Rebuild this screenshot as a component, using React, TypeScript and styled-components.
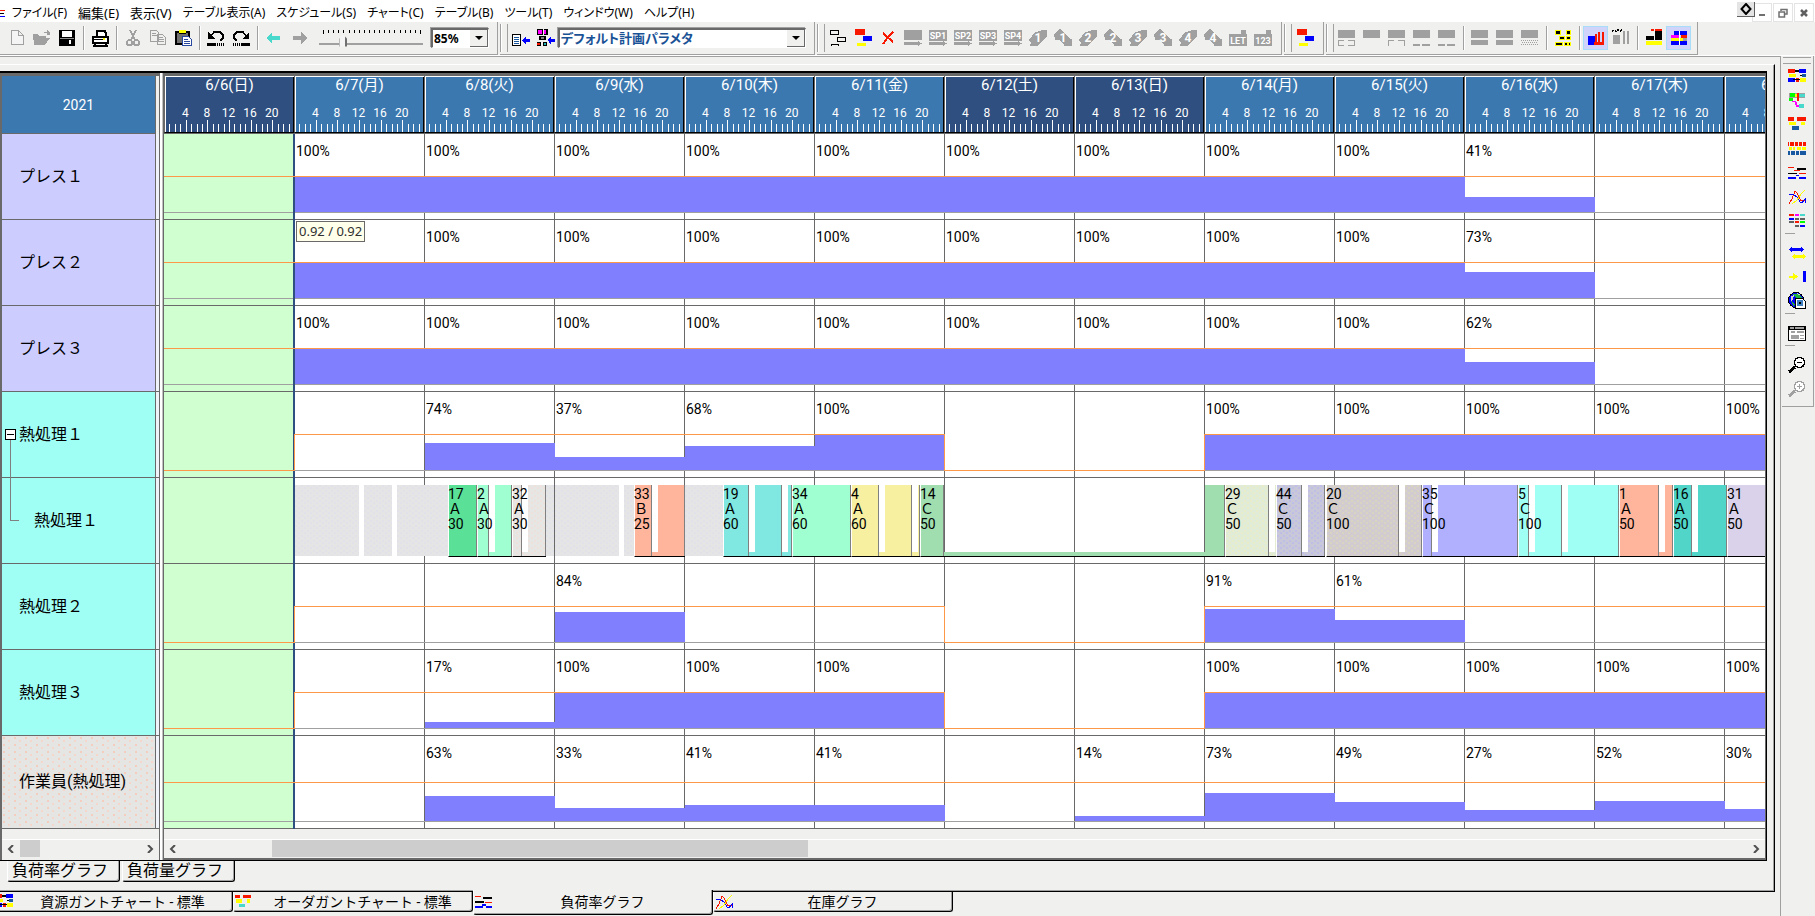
import React from "react";
import styled, { createGlobalStyle, css } from "styled-components";

const uiFont = `"Noto Sans", "Noto Sans CJK JP", sans-serif`;
const gridFont = `Roboto, "Noto Sans CJK JP", sans-serif`;

const color = {
  face: "#f0f0ef",
  shade: "#a0a0a0",
  dark: "#696969",
  week: "#3c78b0",
  weekend: "#2f4f80",
  load: "#8080ff",
  limit: "#fc9848",
  past: "#d0ffd0",
};

const GlobalStyle = createGlobalStyle`
  *, *::before, *::after { box-sizing: border-box; }
  body { margin: 0; background: ${color.face}; font-family: ${uiFont}; color: #000; }
  button, select, input { font: inherit; color: inherit; margin: 0; padding: 0; border: 0; background: none; border-radius: 0; }
`;

/* ---------- icons ---------- */

type Px = [string, number, number, number, number];

const Svg = styled.svg`
  display: block;
  flex: none;
`;

const Pix = ({ px, children }: { px?: Px[]; children?: React.ReactNode }) => (
  <Svg width="18" height="18" viewBox="0 0 18 18" shapeRendering="crispEdges" aria-hidden="true">
    {(px || []).map(([c, x, y, w, h], i) => (
      <rect key={i} fill={c} x={x} y={y} width={w} height={h} />
    ))}
    {children}
  </Svg>
);

const R = "#f81800";
const B = "#0000ff";
const Y = "#ffff00";
const K = "#000";
const G = "#a0a0a0";
const T = "#48d8cc";
const N = "#1858a0";
const M = "#ff00ff";
const L = "#00ff00";

const steps: Px[] = [[R, 1, 0, 10, 6], [B, 9, 7, 9, 5], [Y, 3, 14, 9, 3]];
const resourceGantt: Px[] = [[R, 0, 1, 7, 4], [K, 7, 2, 4, 2], [B, 11, 1, 7, 4], [Y, 1, 6, 7, 3], [K, 12, 7, 2, 1], [N, 14, 6, 4, 3], [B, 0, 10, 7, 4], [R, 8, 10, 3, 4], [K, 5, 11, 7, 1], [Y, 12, 10, 6, 4]];
const orderGantt: Px[] = [[R, 0, 1, 6, 4], [R, 9, 1, 9, 4], [Y, 1, 6, 7, 3], [Y, 13, 6, 4, 3], [N, 4, 10, 7, 4]];
const orderGanttTab: Px[] = [[R, 0, 2, 5, 3], [R, 8, 2, 8, 3], [Y, 1, 6, 6, 4], [Y, 12, 6, 3, 4], [T, 4, 11, 6, 3]];
const loadGraph: Px[] = [[R, 0, 3, 6, 1], [K, 8, 4, 9, 2], [K, 0, 8, 9, 2], [R, 10, 9, 7, 1], [B, 0, 13, 8, 2], [B, 7, 11, 4, 2], [B, 11, 13, 6, 2]];

const icons: Record<string, React.ReactNode> = {
  new: <Pix><path d="M3.5 1.5H10.500L15.500 6.500V15.500H3.500ZM10.500 1.500V6.500H15.500" fill="#f4f4f4" stroke={G} /></Pix>,
  open: <Pix><path d="M0 5H5L6 7H13V9H17L12 16H1ZM11 3H14V1L17 4V6H14V4H11Z" fill={G} /></Pix>,
  save: <Pix px={[[K, 1, 1, 16, 16], ["#fff", 4, 2, 10, 6], ["#909090", 2, 9, 14, 1], ["#fff", 11, 11, 2, 4]]} />,
  print: <Pix><path d="M5.500 7V1.500H13.500L14.500 3.500V7M1.500 7.500H16.500V13.500H1.500ZM4.500 13.500H13.500L15.500 16.500H3.500Z" fill="#fff" stroke={K} strokeWidth="2" /><rect x="3" y="10" width="11" height="1" fill={K} /><rect x="12" y="9" width="2" height="2" fill={Y} /></Pix>,
  cut: <Pix><path d="M6 1L11 11M12 1L7 11" stroke={G} strokeWidth="2" fill="none" /><circle cx="5.500" cy="13.500" r="2.500" fill="none" stroke={G} strokeWidth="2" /><circle cx="12.500" cy="13.500" r="2.500" fill="none" stroke={G} strokeWidth="2" /></Pix>,
  copy: <Pix px={[[G, 3, 4, 4, 1], [G, 3, 6, 5, 1], [G, 10, 8, 4, 1], [G, 10, 10, 5, 1], [G, 10, 12, 5, 1]]}><path d="M1.500 1.500H7.500L9.500 3.500V12.500H1.500ZM8.500 5.500H13.500L16.500 8.500V15.500H8.500Z" fill="none" stroke={G} /></Pix>,
  paste: <Pix px={[[K, 1, 2, 15, 14], ["#707070", 3, 4, 11, 10], [Y, 5, 1, 7, 3], [K, 5, 4, 7, 1]]}><path d="M8.500 7.500H14.500L17.500 10.500V16.500H8.500Z" fill="#fff" stroke="#2848a0" /><path d="M10 10.500H14M10 12.500H16M10 14.500H16" stroke="#2848a0" /></Pix>,
  undo: <Pix px={[[K, 0, 14, 9, 3], [K, 10, 14, 1, 3], [K, 12, 14, 1, 3], [K, 14, 14, 1, 3], [K, 16, 14, 1, 3]]}><path d="M4 7L7 3H13L16 6V9L13 12" fill="none" stroke={K} strokeWidth="1.500" /><path d="M1 3V10H8Z" fill={K} /></Pix>,
  redo: <Pix px={[[K, 9, 14, 9, 3], [K, 1, 14, 1, 3], [K, 3, 14, 1, 3], [K, 5, 14, 1, 3], [K, 7, 14, 1, 3]]}><path d="M14 7L11 3H5L2 6V9L5 12" fill="none" stroke={K} strokeWidth="1.500" /><path d="M17 3V10H10Z" fill={K} /></Pix>,
  back: <Pix><path d="M1 9L7 4V7H15V11H7V14Z" fill={T} /></Pix>,
  forward: <Pix><path d="M17 9L11 3V7H3V11H11V15Z" fill={G} /></Pix>,
  listIn: <Pix><path d="M.500 5.500H8.500V16.500H.500Z" fill="#fff" stroke={K} /><path d="M2 8.500H7M2 10.500H7M2 12.500H7M2 14.500H7" stroke={N} /><path d="M10 11L14 7V10H18V13H14V16Z" fill={B} /></Pix>,
  chainIn: <Pix px={[[K, 0, 0, 6, 6], [M, 1, 1, 4, 4], [K, 7, 0, 4, 6], [M, 7, 1, 2, 4], [K, 2, 7, 7, 4], ["#808080", 4, 8, 3, 2], [K, 0, 13, 4, 4], [R, 0, 14, 3, 2], [K, 6, 13, 4, 4], ["#20b0b0", 7, 14, 2, 2]]}><path d="M11 11L14 7V10H18V13H14V16Z" fill={B} /></Pix>,
  flow: <Pix><path d="M1.500 1.500H9.500V5.500H1.500ZM8.500 8.500H16.500V12.500H8.500ZM2.500 17V15.500H9.500V17" fill="none" stroke={K} strokeWidth="1.500" /></Pix>,
  steps: <Pix px={steps} />,
  remove: <Pix><path d="M4 4L14 13M14 3L9 8L4 15" fill="none" stroke={R} strokeWidth="2" /></Pix>,
  block: <Pix px={[[G, 0, 1, 18, 10], [G, 0, 13, 15, 3]]}><path d="M14 12L18 14.500L14 17Z" fill={G} /></Pix>,
  g1: <Pix px={[[G, 0, 1, 17, 8], [G, 0, 11, 6, 1], [G, 0, 11, 1, 6], [G, 0, 16, 6, 1], [G, 10, 11, 7, 1], [G, 16, 11, 1, 6], [G, 10, 16, 7, 1]]} />,
  g2: <Pix px={[[G, 0, 1, 17, 8]]} />,
  g3: <Pix px={[[G, 0, 1, 17, 8], [G, 0, 11, 6, 1], [G, 0, 11, 1, 6], [G, 10, 11, 7, 1], [G, 16, 11, 1, 6]]} />,
  g4: <Pix px={[[G, 0, 1, 17, 8], [G, 0, 15, 7, 2], [G, 9, 15, 8, 2]]} />,
  g5: <Pix px={[[G, 0, 1, 17, 8], [G, 0, 11, 17, 5]]} />,
  g6: <Pix px={[[G, 0, 1, 17, 8]]}><path d="M0 11.500H17M1 13.500H17M0 15.500H17" stroke={G} strokeDasharray="1 1" /></Pix>,
  yellow: <Pix px={[[Y, 1, 1, 6, 5], [Y, 12, 1, 5, 5], [Y, 5, 7, 6, 4], [Y, 12, 7, 5, 4], [Y, 1, 13, 8, 4], [Y, 10, 13, 7, 4], [K, 2, 2, 4, 3], [K, 13, 2, 3, 3], [K, 6, 8, 4, 2], [K, 13, 8, 3, 2], [K, 2, 14, 6, 2], [K, 11, 14, 2, 2], [K, 15, 14, 1, 2]]} />,
  stackA: <Pix px={[[B, 1, 7, 7, 9], [R, 7, 13, 10, 3], [R, 8, 5, 2, 11], [R, 11, 3, 2, 11], [R, 15, 3, 2, 13]]} />,
  stackB: <Pix px={[[G, 1, 6, 7, 9], [G, 11, 2, 2, 13], [G, 15, 2, 2, 13]]}><path d="M0 2L2 1L4 2L6 1L8 2L10 1" stroke={K} strokeWidth="2" fill="none" strokeDasharray="2 1" /></Pix>,
  blockK: <Pix px={[[R, 6, 0, 3, 2], [R, 10, 0, 7, 2], [K, 10, 2, 7, 9], [K, 1, 7, 8, 4], [Y, 1, 12, 16, 4]]} />,
  layers: <Pix px={[[B, 4, 2, 13, 4], [M, 1, 6, 9, 3], [R, 11, 6, 6, 3], [Y, 1, 9, 12, 3], [G, 13, 9, 4, 3], [B, 1, 12, 16, 4], ["#fff", 9, 2, 1, 14]]} />,
  resourceGantt: <Pix px={resourceGantt} />,
  tree: <Pix px={[[G, 1, 1, 16, 5], [L, 2, 1, 5, 4], [Y, 7, 2, 3, 3], [R, 9, 1, 2, 8], [T, 11, 2, 6, 3], [L, 1, 6, 4, 3], [M, 4, 9, 4, 1], [M, 7, 10, 2, 3], [M, 8, 13, 3, 2], [T, 11, 12, 5, 4]]} />,
  orderGantt: <Pix px={orderGantt} />,
  threeRows: <Pix px={[[R, 0, 2, 1, 4], [R, 2, 2, 4, 4], [R, 7, 2, 3, 4], [R, 11, 2, 3, 4], [R, 15, 2, 3, 4], [Y, 1, 7, 3, 3], [Y, 5, 7, 2, 3], [Y, 9, 7, 4, 3], [Y, 14, 7, 4, 3], [N, 0, 11, 2, 4], [N, 3, 11, 4, 4], [N, 8, 11, 3, 4], [N, 12, 11, 6, 4]]} />,
  loadGraph: <Pix px={[[R, 0, 3, 6, 1], [R, 6, 6, 6, 1], [K, 9, 4, 9, 2], [K, 0, 9, 9, 1], [R, 11, 9, 7, 1], [B, 0, 13, 8, 2], [B, 8, 11, 3, 1], [B, 11, 13, 7, 2]]} />,
  stock: <Pix><path d="M1 16L4 11L7 3L9 5L13 13L17 12" stroke={R} fill="none" /><path d="M1 6L5 6L9 9L12 14L14 15L17 11L17 15" stroke={B} fill="none" /><path d="M17 2L13 6L9 12L4 16" stroke={Y} fill="none" /></Pix>,
  table: <Pix px={[[R, 1, 2, 5, 2], [M, 7, 2, 4, 2], [T, 12, 2, 5, 2], [B, 1, 6, 5, 2], ["#606060", 7, 6, 4, 2], ["#606060", 12, 6, 5, 2], ["#606060", 1, 9, 5, 2], [R, 7, 9, 4, 2], [L, 12, 9, 5, 2], ["#606060", 7, 13, 4, 2], [B, 12, 13, 5, 2]]} />,
  swap: <Pix><path d="M1 5.500L4 2V4H13V2L16 5.500L13 9V7H4V9Z" fill={B} /><path d="M4 12.500L7 10V11H15V10L18 12.500L15 15V14H7V15Z" fill={Y} /></Pix>,
  arrowIn: <Pix px={[[B, 15, 3, 3, 11]]}><path d="M1 8H5V5L10 8.500L5 12V10H1Z" fill={Y} /></Pix>,
  globe: <Pix><circle cx="8" cy="8" r="7.500" fill={B} stroke={K} /><path d="M5 2L11 2L14 6L10 8L7 5ZM3 9L7 12L6 15Z" fill="#20b040" /><path d="M3 4L6 3L5 8L3 9ZM8 1L12 2L11 3Z" fill="#d0d0d0" /><path d="M7.500 6.500H14.500L17.500 9.500V16.500H7.500Z" fill="#fff" stroke={K} /><rect x="9" y="8" width="6" height="6" fill="#4080c0" /><rect x="11" y="10" width="2" height="2" fill={K} /></Pix>,
  dialog: <Pix px={[[K, 0, 2, 18, 15], [G, 2, 3, 4, 2], [G, 7, 3, 9, 2], ["#fff", 1, 6, 16, 10], [G, 3, 7, 4, 2], [G, 9, 7, 7, 2], [G, 3, 11, 8, 4], [G, 12, 11, 4, 1], [G, 12, 14, 4, 1]]} />,
  zoomOut: <Pix><path d="M1 16L7 11" stroke={K} strokeWidth="3" /><circle cx="11.500" cy="6.500" r="5" fill="#fff" stroke={K} strokeWidth="1.500" /><path d="M9 6.500H14" stroke={K} /></Pix>,
  zoomIn: <Pix><path d="M1 16L7 11" stroke={G} strokeWidth="3" /><circle cx="11.500" cy="6.500" r="5" fill="#fff" stroke={G} strokeWidth="1.500" /><path d="M9 6.500H14M11.500 4V9" stroke={G} /></Pix>,
};

const TagText = styled.text<{ $big?: boolean }>`
  font: 700 ${(p) => (p.$big ? "12px" : "9px")} ${gridFont};
  fill: #fff;
  text-anchor: middle;
`;

const TagIcon = ({ tag }: { tag: string }) => (
  <Pix px={[[G, 0, 1, 18, 11], [G, 0, 13, 15, 3]]}>
    <path d="M14 12L18 14.500L14 17Z" fill={G} />
    <TagText x="9" y="10">{tag}</TagText>
  </Pix>
);
const BoxIcon = ({ tag }: { tag: string }) => (
  <Pix px={[[G, 0, 5, 18, 12], [G, 12, 1, 5, 4]]}>
    <TagText x="9" y="15">{tag}</TagText>
  </Pix>
);
const ArrowIcon = ({ tag, down }: { tag: string; down?: boolean }) => (
  <Pix>
    <path d={down ? "M0 5L6 0L17 10L18 9V17H9L10 16L5 11H1Z" : "M0 11L6 3L11 2L12 1H18V7L17 8L11 15L8 17H1L2 14Z"} fill={G} />
    <TagText x="9" y="13" $big>{tag}</TagText>
  </Pix>
);

/* ---------- menu bar ---------- */

const Page = styled.div`
  display: flex;
  flex-direction: column;
  min-height: 100vh;
  background: ${color.face};
`;

const MenuBar = styled.nav`
  display: flex;
  align-items: flex-end;
  height: 22px;
  background: #fff;
`;

const MenuList = styled.div`
  display: flex;
  gap: 11px;
  padding-left: 7px;
  flex: 1;
`;

const MenuItem = styled.button<{ $short?: boolean }>`
  font-size: ${(p) => (p.$short ? "13px" : "12px")};
  line-height: 18px;
  font-feature-settings: "palt";
  white-space: nowrap;
`;

const MenuMark = styled(Svg)`
  margin-bottom: 4px;
`;

const WindowButtons = styled.div`
  display: flex;
  align-items: flex-start;
  height: 22px;
`;

const WindowButton = styled.button<{ $raised?: boolean }>`
  display: grid;
  place-items: center;
  width: 20px;
  height: 19px;
  margin: 3px 1px 0 0;
  border: 1px solid #e4e4e4;
  ${(p) =>
    p.$raised &&
    css`
      width: 18px;
      height: 15px;
      margin: 2px -3px 0 0;
      background: #e4e4e4;
      border: 0;
      border-right: 1px solid #606060;
      border-bottom: 1px solid #606060;
      z-index: 1;
    `}
`;

/* ---------- tool bars ---------- */

const ToolBars = styled.div`
  display: flex;
  height: 34px;
  border-bottom: 1px solid #fff;
`;

const ToolGroup = styled.div<{ $first?: boolean }>`
  display: flex;
  align-items: center;
  height: 33px;
  padding: 0 6px 0 ${(p) => (p.$first ? "4px" : "0")};
  margin-right: 2px;
  border-right: 1px solid ${color.shade};
  border-bottom: 1px solid ${color.shade};
`;

const Grip = styled.div`
  width: 8px;
  height: 28px;
  border: solid ${color.shade};
  border-width: 0 1px;
  background: linear-gradient(90deg, #fff 1px, transparent 1px);
  flex: none;
`;

const ToolButton = styled.button<{ $on?: boolean }>`
  display: grid;
  place-items: center;
  width: 25px;
  height: 24px;
  flex: none;
  ${(p) =>
    p.$on &&
    css`
      background: #d0d4fa;
      border: 1px solid #a8dcf8;
    `}
`;

const Separator = styled.div`
  width: 8px;
  height: 24px;
  flex: none;
  background: linear-gradient(90deg, transparent 4px, ${color.shade} 4px, ${color.shade} 5px, #fff 5px, #fff 6px, transparent 6px);
`;

const SliderBox = styled.div`
  width: 104px;
  margin: 0 8px;
`;

const Slider = styled.input`
  display: block;
  width: 100%;
  height: 12px;
  appearance: none;
  background: linear-gradient(${color.shade}, ${color.shade}) 0 8px / 100% 2px no-repeat;
  &::-webkit-slider-thumb {
    appearance: none;
    width: 8px;
    height: 12px;
    background: #f4f4f4;
    border-right: 2px solid #707070;
    border-left: 1px solid #b0b0b0;
    clip-path: polygon(50% 0, 100% 35%, 100% 100%, 0 100%, 0 35%);
  }
`;

const Combo = styled.label<{ $wide?: boolean }>`
  display: flex;
  align-items: center;
  width: ${(p) => (p.$wide ? "248px" : "58px")};
  height: 20px;
  margin-right: 2px;
  background: #fff;
  border: 1px solid #fff;
  border-top: 2px solid ${color.dark};
  border-left: 2px solid ${color.dark};
  box-shadow: -1px -1px 0 ${color.shade};
`;

const ComboSelect = styled.select<{ $navy?: boolean }>`
  appearance: none;
  flex: 1;
  min-width: 0;
  height: 17px;
  padding-left: 1px;
  font-size: ${(p) => (p.$navy ? "13px" : "12px")};
  line-height: 17px;
  font-weight: 700;
  font-feature-settings: "palt";
  color: ${(p) => (p.$navy ? "#1a5296" : "#000")};
`;

const ComboArrow = styled.span`
  display: grid;
  place-items: center;
  width: 18px;
  height: 17px;
  background: ${color.face};
  border-right: 1px solid ${color.dark};
  border-bottom: 1px solid ${color.dark};
`;

/* ---------- work area ---------- */

const Body = styled.div`
  display: flex;
  flex: 1;
`;

const WorkArea = styled.main`
  flex: 1;
  min-width: 0;
  padding-top: 7px;
  border-top: 1px solid ${color.shade};
  border-right: 1px solid ${color.shade};
`;

const Frame = styled.section`
  margin-right: 5px;
  padding: 6px 7px 0 0;
  border-top: 1px solid #fff;
  border-right: 1px solid #000;
  border-bottom: 1px solid #000;
  box-shadow: inset -1px -1px 0 ${color.shade};
`;

const ChartBox = styled.div`
  display: flex;
  border: solid #000;
  border-width: 2px 1px 1px 0;
`;

const NamePane = styled.div`
  width: 160px;
  flex: none;
  border-top: 3px solid ${color.dark};
  border-left: 2px solid ${color.dark};
  border-right: 1px solid ${color.dark};
`;

const Splitter = styled.div`
  width: 4px;
  flex: none;
  background: linear-gradient(90deg, #fff 2px, #c0c0c0 2px, #c0c0c0 3px, ${color.dark} 3px);
`;

const ChartPane = styled.div`
  flex: 1;
  min-width: 0;
  border-top: 3px solid ${color.dark};
  border-right: 1px solid ${color.dark};
  border-bottom: 2px solid ${color.dark};
`;

const YearCell = styled.div`
  display: grid;
  place-items: center;
  height: 58px;
  margin-right: 3px;
  background: ${color.week};
  color: #fff;
  font: 14px/20px ${gridFont};
  border-right: 1px solid ${color.dark};
  border-bottom: 1px solid ${color.dark};
`;

type Tone = "lilac" | "cyan" | "grey";
const toneBackground = {
  lilac: "#ccccff",
  cyan: "#a0fff5",
  grey: "radial-gradient(circle at 2px 2px, #f4cdbf 0 1px, transparent 1px) 0 0 / 11px 7px, radial-gradient(circle at 7px 5px, #f4d6cb 0 1px, transparent 1px) 0 0 / 11px 7px, #e5e5e4",
};

const NameRow = styled.div<{ $tall?: boolean }>`
  display: flex;
  height: ${(p) => (p.$tall ? "93px" : "86px")};
  padding-right: 3px;
  background: #f0f4fa;
  border-bottom: 1px solid ${color.dark};
`;

const NameCell = styled.div<{ $tone: Tone; $indent?: boolean }>`
  position: relative;
  display: flex;
  align-items: center;
  flex: 1;
  padding-left: ${(p) => (p.$indent ? "32px" : "17px")};
  background: ${(p) => toneBackground[p.$tone]};
  border-right: 1px solid ${color.dark};
  font: 16px/20px ${gridFont};
  white-space: nowrap;
`;

const TreeToggle = styled.button`
  position: absolute;
  left: 3px;
  top: 37px;
  display: grid;
  place-items: center;
  width: 11px;
  height: 11px;
  background: #fff;
  border: 1px solid #000;
`;

const TreeLine = styled.span<{ $end?: boolean }>`
  position: absolute;
  left: 8px;
  top: ${(p) => (p.$end ? "0" : "48px")};
  width: ${(p) => (p.$end ? "9px" : "1px")};
  height: ${(p) => (p.$end ? "43px" : "38px")};
  border-left: 1px solid #808080;
  border-bottom: ${(p) => (p.$end ? "1px solid #808080" : "0")};
`;

const Timeline = styled.div`
  position: relative;
  overflow: hidden;
`;

const DayRow = styled.div`
  display: flex;
  height: 58px;
  background: ${color.week};
  border-bottom: 1px solid ${color.dark};
`;

const DayHead = styled.div<{ $off?: boolean }>`
  display: flex;
  flex-direction: column;
  align-items: center;
  width: 130px;
  flex: none;
  color: #fff;
  background: ${(p) => (p.$off ? color.weekend : color.week)};
  border-left: 1px solid ${color.dark};
  border-bottom: 1px solid #000;
  box-shadow: inset 1px 1px 0 #fff, inset -1px 0 0 #000;
  font-family: ${gridFont};
`;

const DayName = styled.div`
  height: 30px;
  font-size: 15px;
  line-height: 18px;
`;

const Hours = styled.div`
  display: grid;
  grid-template-columns: repeat(5, 1fr);
  width: 108px;
  height: 14px;
  margin-right: 2px;
  font-size: 12px;
  line-height: 15px;
  text-align: center;
`;

const LoadRow = styled.div<{ $tall?: boolean }>`
  position: relative;
  display: flex;
  height: ${(p) => (p.$tall ? "93px" : "86px")};
  background: repeating-linear-gradient(90deg, ${color.dark} 0 1px, #fff 1px 130px);
  border-bottom: 1px solid ${color.dark};
`;

const BaseLine = styled.div`
  position: absolute;
  left: 0;
  right: 0;
  bottom: 6px;
  height: 1px;
  background: ${color.shade};
`;

const Day = styled.div<{ $past?: boolean }>`
  position: relative;
  display: flex;
  flex-direction: column;
  justify-content: space-between;
  width: 130px;
  flex: none;
  padding-bottom: 7px;
  background: ${(p) => (p.$past ? color.past : "transparent")};
`;

const Percent = styled.span`
  padding: 8px 0 0 2px;
  font: 14px/18px ${gridFont};
`;

const LoadBar = styled.div`
  width: 130px;
  margin-left: 1px;
  background: ${color.load};
`;

const Limit = styled.div<{ $low?: boolean; $step?: boolean; $tall?: boolean }>`
  position: absolute;
  left: 0;
  right: 0;
  bottom: 6px;
  height: ${(p) => (p.$tall ? "40px" : "37px")};
  border: 0 solid ${color.limit};
  border-top-width: ${(p) => (p.$low ? "0" : "1px")};
  border-bottom-width: ${(p) => (p.$low ? "1px" : "0")};
  border-left-width: ${(p) => (p.$step ? "1px" : "0")};
  z-index: 1;
`;

const NowLine = styled.div`
  position: absolute;
  top: 58px;
  bottom: 0;
  left: 129px;
  width: 2px;
  background: ${color.weekend};
`;

const Tip = styled.div`
  position: absolute;
  top: 145px;
  left: 132px;
  z-index: 2;
  padding: 0 2px;
  background: #ffffea;
  border: 1px solid ${color.dark};
  font-size: 13px;
  line-height: 19px;
  color: #303030;
`;

const dots = (dot: string) => css`
  background-image: radial-gradient(circle at 1px 1px, ${dot} 0 1px, transparent 1px),
    radial-gradient(circle at 4px 3px, ${dot} 0 1px, transparent 1px);
  background-size: 6px 5px;
`;

const Job = styled.div`
  position: absolute;
  top: 7px;
  display: flex;
  align-items: flex-end;
  height: 72px;
  border-bottom: 1px solid #000;
  border-left: 1px solid #fff;
`;

const JobPart = styled.div<{ $fill: string; $dot?: string; $thin?: boolean }>`
  flex: none;
  height: ${(p) => (p.$thin ? "4px" : "71px")};
  background-color: ${(p) => p.$fill};
  border-right: ${(p) => (p.$thin ? "0" : "1px solid #808080")};
  ${(p) => p.$dot && dots(p.$dot)}
`;

const JobText = styled.div`
  position: absolute;
  top: 2px;
  left: -1px;
  z-index: 1;
  font: 14px/15px ${gridFont};
  white-space: pre;
`;

const Idle = styled.div`
  position: absolute;
  top: 7px;
  height: 71px;
  background-color: #e5e5e6;
  ${dots("#e1e1ea")}
`;

const ScrollBar = styled.div`
  display: flex;
  align-items: center;
  height: 29px;
  padding-top: 10px;
  background: linear-gradient(transparent 10px, #fff 10px, #fff 11px, transparent 11px);
`;

const ScrollArrow = styled.button`
  display: grid;
  place-items: center;
  width: 18px;
  height: 18px;
  flex: none;
`;

const ScrollTrack = styled.div`
  flex: 1;
  height: 17px;
`;

const ScrollThumb = styled.div<{ $from: string; $size: string }>`
  width: ${(p) => p.$size};
  height: 17px;
  margin-left: ${(p) => p.$from};
  background: #cdcdcd;
`;

const SheetTabs = styled.div`
  display: flex;
  gap: 2px;
  height: 30px;
  padding-left: 7px;
`;

const SheetTab = styled.button`
  width: 113px;
  height: 21px;
  padding-left: 4px;
  text-align: left;
  font: 16px/20px ${gridFont};
  border-left: 1px solid #fff;
  border-right: 1px solid #000;
  border-bottom: 1px solid #000;
  box-shadow: inset -1px -1px 0 ${color.shade};
  border-radius: 0 0 3px 3px;
`;

const DocTabs = styled.div`
  display: flex;
  height: 24px;
  margin-left: -7px;
`;

const DocTab = styled.button<{ $active?: boolean }>`
  display: flex;
  align-items: center;
  width: 240px;
  height: ${(p) => (p.$active ? "25px" : "20px")};
  margin-top: ${(p) => (p.$active ? "-2px" : "0")};
  padding-left: 1px;
  font: 14px/18px ${gridFont};
  background: ${color.face};
  border-left: 1px solid #fff;
  border-right: 1px solid #000;
  border-bottom: 1px solid #000;
  box-shadow: inset -1px -1px 0 ${color.shade};
  border-radius: 0 0 3px 3px;
`;

const DocLabel = styled.span`
  flex: 1;
  text-align: center;
  white-space: pre;
`;

const SideBar = styled.aside`
  display: flex;
  flex-direction: column;
  align-items: center;
  align-self: flex-start;
  width: 32px;
  margin: 0 1px;
  padding: 1px 2px 5px 0;
  border-right: 1px solid ${color.shade};
  border-bottom: 1px solid ${color.shade};
`;

const SideGrip = styled.div`
  width: 28px;
  height: 7px;
  margin-bottom: 1px;
  border: solid ${color.shade};
  border-width: 1px 0;
`;

const SideRule = styled.div`
  width: 10px;
  height: 8px;
  align-self: flex-start;
  margin-left: 3px;
  border-top: 1px solid ${color.shade};
`;

/* ---------- data ---------- */

const menus = ["ファイル(F)", "編集(E)", "表示(V)", "テーブル表示(A)", "スケジュール(S)", "チャート(C)", "テーブル(B)", "ツール(T)", "ウィンドウ(W)", "ヘルプ(H)"];

const days = ["6/6(日)", "6/7(月)", "6/8(火)", "6/9(水)", "6/10(木)", "6/11(金)", "6/12(土)", "6/13(日)", "6/14(月)", "6/15(火)", "6/16(水)", "6/17(木)", "6/18(金)"];
const isOff = (i: number) => i === 0 || i === 6 || i === 7;

type Row = { name: string; tone: Tone; loads?: number[]; rests?: boolean; tall?: boolean; open?: boolean; child?: boolean; tip?: boolean };
const F = 100;
const rows: Row[] = [
  { name: "プレス１", tone: "lilac", loads: [0, F, F, F, F, F, F, F, F, F, 41, 0, 0] },
  { name: "プレス２", tone: "lilac", loads: [0, F, F, F, F, F, F, F, F, F, 73, 0, 0], tip: true },
  { name: "プレス３", tone: "lilac", loads: [0, F, F, F, F, F, F, F, F, F, 62, 0, 0] },
  { name: "熱処理１", tone: "cyan", loads: [0, 0, 74, 37, 68, F, 0, 0, F, F, F, F, F], rests: true, open: true },
  { name: "熱処理１", tone: "cyan", child: true },
  { name: "熱処理２", tone: "cyan", loads: [0, 0, 0, 84, 0, 0, 0, 0, 91, 61, 0, 0, 0], rests: true },
  { name: "熱処理３", tone: "cyan", loads: [0, 0, 17, F, F, F, 0, 0, F, F, F, F, F], rests: true },
  { name: "作業員(熱処理)", tone: "grey", loads: [0, 0, 63, 33, 41, 41, 0, 14, 73, 49, 27, 52, 30], tall: true },
];

/* start, then alternating widths of worked and paused spans */
type JobData = { at: number; spans: number[]; fill: string; dot?: string; text: string };
const jobs: JobData[] = [
  { at: 284, spans: [28], fill: "#5ae097", text: "17\nＡ\n30" },
  { at: 313, spans: [11, 6, 17], fill: "#a0ffd0", text: "2\nＡ\n30" },
  { at: 348, spans: [9, 6, 18], fill: "#e6e6e4", dot: "#eee0da", text: "32\nＡ\n30" },
  { at: 470, spans: [17, 6, 27], fill: "#ffb59c", text: "33\nＢ\n25" },
  { at: 559, spans: [25, 6, 27, 6, 4], fill: "#80e8e0", text: "19\nＡ\n60" },
  { at: 628, spans: [58], fill: "#a0ffd0", text: "34\nＡ\n60" },
  { at: 687, spans: [27, 6, 27, 6, 2], fill: "#f6f0a0", text: "4\nＡ\n60" },
  { at: 756, spans: [23, 261, 20], fill: "#a0deb0", text: "14\nＣ\n50" },
  { at: 1061, spans: [43, 6, 2], fill: "#e0ecd8", dot: "#e8ecc8", text: "29\nＣ\n50" },
  { at: 1112, spans: [25, 6, 17], fill: "#c8c8d8", dot: "#bebee6", text: "44\nＣ\n50" },
  { at: 1162, spans: [72, 6, 17], fill: "#d2ccd0", dot: "#d9d3c2", text: "20\nＣ\n100" },
  { at: 1258, spans: [9, 6, 80], fill: "#b0b0ff", text: "35\nＣ\n100" },
  { at: 1354, spans: [10, 6, 27, 6, 51], fill: "#a0fff5", text: "5\nＣ\n100" },
  { at: 1455, spans: [39, 6, 8], fill: "#ffb59c", text: "1\nＡ\n50" },
  { at: 1509, spans: [18, 6, 29], fill: "#50d5c8", text: "16\nＡ\n50" },
  { at: 1563, spans: [120], fill: "#dad2ea", text: "31\nＡ\n50" },
];
const idles: [number, number][] = [[131, 64], [200, 28], [233, 51], [382, 8], [391, 64], [460, 10], [521, 38]];

type Tool = string | { sp?: string; up?: string; down?: string; box?: string };
const editTools: Tool[] = ["flow", "steps", "remove", "block", { sp: "SP1" }, { sp: "SP2" }, { sp: "SP3" }, { sp: "SP4" }, { up: "1" }, { down: "1" }, { up: "2" }, { down: "2" }, { up: "3" }, { down: "3" }, { up: "4" }, { down: "4" }, { box: "LET" }, { box: "123" }];

const toolIcon = (t: Tool) => {
  if (typeof t === "string") return icons[t];
  if (t.sp) return <TagIcon tag={t.sp} />;
  if (t.box) return <BoxIcon tag={t.box} />;
  return t.up ? <ArrowIcon tag={t.up} /> : <ArrowIcon tag={t.down || ""} down />;
};

const Tools = ({ list, on = [] }: { list: Tool[]; on?: string[] }) => (
  <>
    {list.map((t, i) =>
      t === "|" ? <Separator key={i} /> : (
        <ToolButton key={i} type="button" $on={typeof t === "string" && on.includes(t)}>{toolIcon(t)}</ToolButton>
      )
    )}
  </>
);

const DownMark = () => (
  <ComboArrow>
    <Svg width="8" height="4" viewBox="0 0 8 4" aria-hidden="true"><path d="M0 0H8L4 4Z" fill="#000" /></Svg>
  </ComboArrow>
);

const Scroller = ({ from, size }: { from: string; size: string }) => (
  <ScrollBar>
    <ScrollArrow type="button" aria-label="左へ">
      <Svg width="8" height="8" viewBox="0 0 8 8"><path d="M6 0L2 4L6 8" fill="none" stroke="#505050" strokeWidth="2" /></Svg>
    </ScrollArrow>
    <ScrollTrack><ScrollThumb $from={from} $size={size} /></ScrollTrack>
    <ScrollArrow type="button" aria-label="右へ">
      <Svg width="8" height="8" viewBox="0 0 8 8"><path d="M2 0L6 4L2 8" fill="none" stroke="#505050" strokeWidth="2" /></Svg>
    </ScrollArrow>
  </ScrollBar>
);

const HourTicks = () => (
  <Svg width="129" height="12" viewBox="1 0 129 12" shapeRendering="crispEdges" aria-hidden="true">
    {Array.from({ length: 23 }, (_, i) => {
      const h = i + 1;
      const top = h % 4 === 0 ? 0 : 4;
      return <rect key={h} x={Math.round((h * 130) / 24)} y={top} width="1" height={12 - top} fill="#fff" />;
    })}
  </Svg>
);

const LoadChart = ({ row }: { row: Row }) => {
  const full = row.tall ? 39 : 36;
  const cap = row.tall ? 39 : 35;
  return (
    <LoadRow $tall={row.tall}>
      <BaseLine />
      {(row.loads || []).map((v, i) => {
        const low = !!row.rests && isOff(i);
        const step = !!row.rests && (i === 1 || i === 6 || i === 8);
        return (
          <Day key={i} $past={i === 0}>
            {v > 0 && <Percent>{row.tip && i === 1 ? "" : `${v}%`}</Percent>}
            {v > 0 && <LoadBar style={{ height: Math.min(cap, Math.round((full * v) / 100)) }} />}
            {i === 0 && <BaseLine />}
            <Limit $low={low} $step={step} $tall={row.tall} />
          </Day>
        );
      })}
    </LoadRow>
  );
};

const JobChart = () => (
  <LoadRow>
    <Day $past />
    {idles.map(([x, w]) => <Idle key={x} style={{ left: x, width: w }} />)}
    {jobs.map((j) => (
      <Job key={j.at} style={{ left: j.at }}>
        <JobText>{j.text}</JobText>
        {j.spans.map((w, i) => (
          <JobPart key={i} $fill={j.fill} $dot={j.dot} $thin={i % 2 === 1} style={{ width: w }} />
        ))}
      </Job>
    ))}
  </LoadRow>
);

export default function App() {
  return (
    <Page>
      <GlobalStyle />
      <MenuBar>
        <MenuMark width="5" height="10" viewBox="0 0 5 10" shapeRendering="crispEdges" aria-hidden="true">
          <path d="M0 2.500H5" stroke={R} /><path d="M0 5.500H4" stroke={K} /><path d="M0 8.500H5" stroke={B} />
        </MenuMark>
        <MenuList>{menus.map((m) => <MenuItem key={m} type="button" $short={m.length === 5}>{m}</MenuItem>)}</MenuList>
        <WindowButtons>
          <WindowButton type="button" $raised aria-label="マーク">
            <Svg width="12" height="12" viewBox="0 0 12 12"><path d="M6 1L10.500 6L6 11L1.500 6Z" fill="none" stroke="#000" strokeWidth="2" /></Svg>
          </WindowButton>
          <WindowButton type="button" aria-label="最小化"><Svg width="8" height="8" viewBox="0 0 8 8"><path d="M1 6H7" stroke="#707070" strokeWidth="2" /></Svg></WindowButton>
          <WindowButton type="button" aria-label="元に戻す"><Svg width="10" height="10" viewBox="0 0 10 10"><path d="M3 3V1.500H9V6H7M1 4H6.500V9H1Z" fill="none" stroke="#707070" strokeWidth="1.500" /></Svg></WindowButton>
          <WindowButton type="button" aria-label="閉じる"><Svg width="8" height="8" viewBox="0 0 8 8"><path d="M1 1L7 7M7 1L1 7" stroke="#606060" strokeWidth="2.500" /></Svg></WindowButton>
        </WindowButtons>
      </MenuBar>

      <ToolBars>
        <ToolGroup $first>
          <Tools list={["new", "open", "save", "|", "print", "|", "cut", "copy", "paste", "|", "undo", "redo", "|", "back", "forward"]} />
          <SliderBox>
            <Svg width="104" height="5" viewBox="0 0 104 5" shapeRendering="crispEdges" aria-hidden="true">
              {Array.from({ length: 20 }, (_, i) => <rect key={i} x={4 + Math.round(i * 5.1)} y="0" width="1" height={i % 19 ? 3 : 4} fill="#000" />)}
            </Svg>
            <Slider type="range" defaultValue={21} aria-label="表示倍率" />
          </SliderBox>
          <Combo>
            <ComboSelect aria-label="倍率"><option>85%</option></ComboSelect>
            <DownMark />
          </Combo>
        </ToolGroup>
        <ToolGroup>
          <Grip />
          <Tools list={["listIn", "chainIn"]} />
          <Combo $wide>
            <ComboSelect $navy aria-label="計画パラメタ"><option>デフォルト計画パラメタ</option></ComboSelect>
            <DownMark />
          </Combo>
        </ToolGroup>
        <ToolGroup><Grip /><Tools list={editTools} /></ToolGroup>
        <ToolGroup><Grip /><Tools list={["steps"]} /></ToolGroup>
        <ToolGroup>
          <Grip />
          <Tools
            list={["g1", "g2", "g3", "g4", "g4", "|", "g5", "g5", "g6", "|", "yellow", "|", "stackA", "stackB", "|", "blockK", "layers"]}
            on={["stackA", "layers"]}
          />
        </ToolGroup>
      </ToolBars>

      <Body>
        <WorkArea>
          <Frame>
            <ChartBox>
              <NamePane>
                <YearCell>2021</YearCell>
                {rows.map((r, i) => (
                  <NameRow key={i} $tall={r.tall}>
                    <NameCell $tone={r.tone} $indent={r.child}>
                      {r.open && (
                        <>
                          <TreeToggle type="button" aria-label="折りたたむ">
                            <Svg width="7" height="1" viewBox="0 0 7 1"><rect width="7" height="1" fill="#000" /></Svg>
                          </TreeToggle>
                          <TreeLine />
                        </>
                      )}
                      {r.child && <TreeLine $end />}
                      {r.name}
                    </NameCell>
                  </NameRow>
                ))}
                <Scroller from="0px" size="20px" />
              </NamePane>
              <Splitter />
              <ChartPane>
                <Timeline>
                  <DayRow>
                    {days.map((d, i) => (
                      <DayHead key={d} $off={isOff(i)}>
                        <DayName>{d}</DayName>
                        <Hours>{[4, 8, 12, 16, 20].map((h) => <span key={h}>{h}</span>)}</Hours>
                        <HourTicks />
                      </DayHead>
                    ))}
                  </DayRow>
                  {rows.map((r, i) => (r.child ? <JobChart key={i} /> : <LoadChart key={i} row={r} />))}
                  <NowLine />
                  <Tip>0.92 / 0.92</Tip>
                </Timeline>
                <Scroller from="90px" size="calc(40% - 90px)" />
              </ChartPane>
            </ChartBox>
            <SheetTabs>
              <SheetTab type="button">負荷率グラフ</SheetTab>
              <SheetTab type="button">負荷量グラフ</SheetTab>
            </SheetTabs>
          </Frame>
          <DocTabs>
            <DocTab type="button"><Pix px={resourceGantt} /><DocLabel>資源ガントチャート - 標準</DocLabel></DocTab>
            <DocTab type="button"><Pix px={orderGanttTab} /><DocLabel>オーダガントチャート - 標準</DocLabel></DocTab>
            <DocTab type="button" $active><Pix px={loadGraph} /><DocLabel>負荷率グラフ</DocLabel></DocTab>
            <DocTab type="button">{icons.stock}<DocLabel>在庫グラフ</DocLabel></DocTab>
          </DocTabs>
        </WorkArea>
        <SideBar>
          <SideGrip />
          <Tools list={["resourceGantt", "tree", "orderGantt", "threeRows", "loadGraph", "stock", "table"]} />
          <SideRule />
          <Tools list={["swap", "arrowIn", "globe"]} />
          <SideRule />
          <Tools list={["dialog"]} />
          <SideRule />
          <Tools list={["zoomOut", "zoomIn"]} />
        </SideBar>
      </Body>
    </Page>
  );
}
